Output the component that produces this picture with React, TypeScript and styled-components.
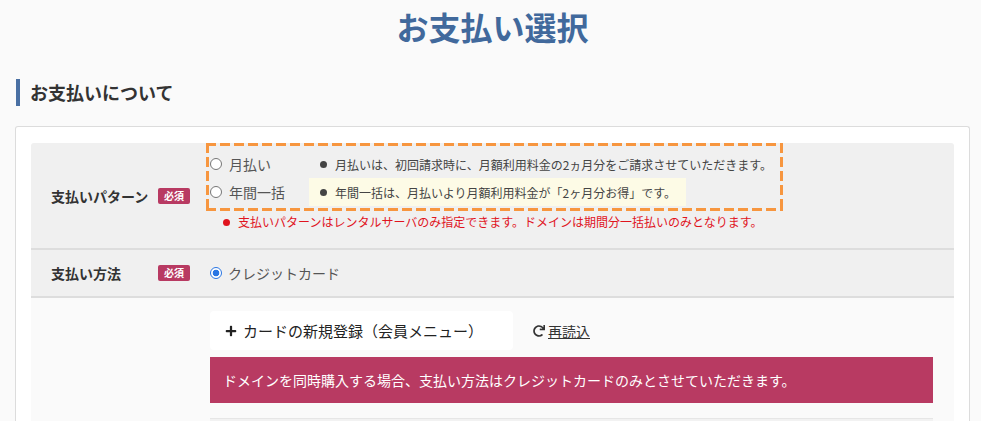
import React from 'react';
import styled, { createGlobalStyle } from 'styled-components';
import { FaPlus, FaRedo } from 'react-icons/fa';

const GlobalStyle = createGlobalStyle`
  body {
    margin: 0;
    background: #fafafa;
    font-family: "Noto Sans CJK JP", "Noto Sans", sans-serif;
    color: #333;
  }
`;

const Page = styled.div`
  padding: 0 11px 0 15px;
`;

const Title = styled.h1`
  margin: 0;
  padding-top: 2px;
  text-align: center;
  font-size: 32px;
  line-height: 48px;
  font-weight: 700;
  color: #41699c;
`;

const SectionHeading = styled.h2`
  margin: 29px 0 0 1px;
  height: 27px;
  line-height: 26px;
  border-left: 4px solid #4a70a3;
  padding-left: 10px;
  font-size: 18px;
  font-weight: 700;
  color: #333;
`;

const Card = styled.div`
  margin-top: 20px;
  background: #fff;
  border: 1px solid #dcdcdc;
  border-bottom: none;
  border-radius: 3px 3px 0 0;
  padding: 16px 15px 0;
`;

const Row = styled.div<{ $tone: 'gray' | 'light' }>`
  display: grid;
  grid-template-columns: 175px 1fr;
  background: ${(p) => (p.$tone === 'gray' ? '#f0f0f0' : '#fafafa')};
  border-bottom: ${(p) => (p.$tone === 'gray' ? '2px solid #dddddd' : 'none')};
  &:first-child {
    border-radius: 3px 3px 0 0;
  }
`;

const LabelCell = styled.div`
  display: flex;
  align-items: center;
  padding-left: 20px;
`;

const LabelText = styled.span`
  width: 107px;
  font-size: 14px;
  font-weight: 700;
  color: #333;
`;

const Badge = styled.span`
  display: inline-flex;
  align-items: center;
  justify-content: center;
  width: 32px;
  height: 16px;
  border-radius: 2px;
  background: #b83a62;
  color: #fff;
  font-size: 10px;
  font-weight: 700;
  line-height: 1;
`;

const ContentCell = styled.div<{ $pad?: string }>`
  padding: ${(p) => p.$pad || '0'};
  min-width: 0;
`;

const DashedBox = styled.div`
  width: 577px;
  box-sizing: border-box;
  padding: 7px 3px 5px 3px;
  display: grid;
  grid-template-columns: 100px auto;
  grid-auto-rows: 28px;
  background:
    repeating-linear-gradient(90deg, #f7963f 0 10px, transparent 10px 14px) top left / 100% 3px no-repeat,
    repeating-linear-gradient(90deg, #f7963f 0 10px, transparent 10px 14px) bottom left / 100% 3px no-repeat,
    repeating-linear-gradient(180deg, #f7963f 0 10px, transparent 10px 14px) top left / 3px 100% no-repeat,
    repeating-linear-gradient(180deg, #f7963f 0 10px, transparent 10px 14px) top right / 3px 100% no-repeat;
`;

const Option = styled.label`
  display: flex;
  align-items: center;
  gap: 7px;
  padding-left: 1px;
  font-size: 14px;
  color: #555;
`;

const Radio = styled.span<{ $checked?: boolean }>`
  width: 12px;
  height: 12px;
  box-sizing: border-box;
  border-radius: 50%;
  flex: none;
  border: 1px solid ${(p) => (p.$checked ? '#2a76e3' : '#767676')};
  background: ${(p) =>
    p.$checked
      ? 'radial-gradient(circle, #2a76e3 0 3.2px, #fff 3.6px)'
      : '#fff'};
`;

const Note = styled.div<{ $highlight?: boolean }>`
  display: flex;
  align-items: center;
  width: ${(p) => (p.$highlight ? '377px' : 'auto')};
  box-sizing: border-box;
  padding-left: 11px;
  background: ${(p) => (p.$highlight ? '#fdfbe6' : 'transparent')};
  font-size: 12px;
  color: #444;
  white-space: nowrap;
`;

const Dot = styled.span<{ $color?: string }>`
  width: 7px;
  height: 7px;
  border-radius: 50%;
  background: ${(p) => p.$color || '#444'};
  margin-right: 8px;
  flex: none;
`;

const Warning = styled.div`
  display: flex;
  align-items: center;
  margin: 3px 0 0 17px;
  font-size: 12px;
  line-height: 16px;
  color: #e0141e;
`;

const MethodCell = styled.div`
  display: flex;
  align-items: center;
  height: 46px;
  padding-left: 4px;
`;

const MethodOption = styled(Option)`
  gap: 6px;
  padding-left: 0;
`;

const Actions = styled.div`
  display: flex;
  align-items: center;
  gap: 20px;
`;

const AddButton = styled.button`
  display: flex;
  align-items: center;
  gap: 6px;
  width: 303px;
  height: 39px;
  padding: 0 0 0 15px;
  border: none;
  border-radius: 4px;
  background: #fff;
  font-family: inherit;
  font-size: 15px;
  color: #222;
  cursor: pointer;
`;

const ReloadLink = styled.a`
  display: flex;
  align-items: center;
  font-size: 14px;
  color: #333;
  text-decoration: none;
  cursor: pointer;
  span {
    text-decoration: underline;
    padding-left: 3px;
  }
`;

const Banner = styled.div`
  margin-top: 7px;
  width: 723px;
  height: 46px;
  display: flex;
  align-items: center;
  box-sizing: border-box;
  padding-left: 13px;
  background: #b83a62;
  color: #fff;
  font-size: 14px;
`;

const NextBox = styled.div`
  margin-top: 15px;
  width: 723px;
  height: 20px;
  background: #f2f2f2;
  border-top: 1px solid #e6e6e6;
`;

export default function App() {
  return (
    <>
      <GlobalStyle />
      <Page>
        <Title>お支払い選択</Title>
        <SectionHeading>お支払いについて</SectionHeading>
        <Card>
          <Row $tone="gray">
            <LabelCell>
              <LabelText>支払いパターン</LabelText>
              <Badge>必須</Badge>
            </LabelCell>
            <ContentCell $pad="0 0 18px 0">
              <DashedBox>
                <Option>
                  <Radio />
                  月払い
                </Option>
                <Note>
                  <Dot />
                  月払いは、初回請求時に、月額利用料金の2ヵ月分をご請求させていただきます。
                </Note>
                <Option>
                  <Radio />
                  年間一括
                </Option>
                <Note $highlight>
                  <Dot />
                  年間一括は、月払いより月額利用料金が「2ヶ月分お得」です。
                </Note>
              </DashedBox>
              <Warning>
                <Dot $color="#e0141e" />
                支払いパターンはレンタルサーバのみ指定できます。ドメインは期間分一括払いのみとなります。
              </Warning>
            </ContentCell>
          </Row>
          <Row $tone="gray">
            <LabelCell>
              <LabelText>支払い方法</LabelText>
              <Badge>必須</Badge>
            </LabelCell>
            <MethodCell>
              <MethodOption>
                <Radio $checked />
                クレジットカード
              </MethodOption>
            </MethodCell>
          </Row>
          <Row $tone="light">
            <div />
            <ContentCell $pad="13px 0 0 4px">
              <Actions>
                <AddButton>
                  <FaPlus size={12} />
                  カードの新規登録（会員メニュー）
                </AddButton>
                <ReloadLink>
                  <FaRedo size={12} />
                  <span>再読込</span>
                </ReloadLink>
              </Actions>
              <Banner>ドメインを同時購入する場合、支払い方法はクレジットカードのみとさせていただきます。</Banner>
              <NextBox />
            </ContentCell>
          </Row>
        </Card>
      </Page>
    </>
  );
}
